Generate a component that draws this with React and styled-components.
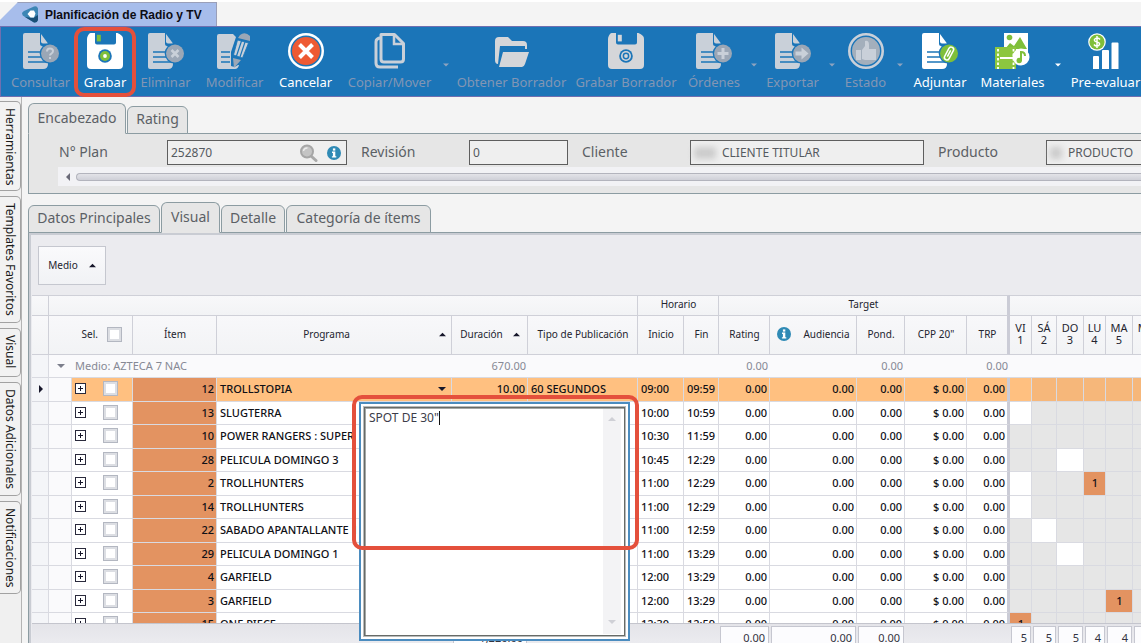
import React from "react";
import styled, { createGlobalStyle, css } from "styled-components";

const Global = createGlobalStyle`
  * { box-sizing: border-box; }
  html, body { margin: 0; height: 100%; }
  body { background: #f4f4f4; font-family: "Noto Sans", "Open Sans", sans-serif; overflow: hidden; }
  button, input, textarea { font: inherit; color: inherit; margin: 0; }
`;

const ORANGE = "#e39361";
const LINE = "#d9dae1";
const BLUE = "#1b75b8";

const Shell = styled.div`
  display: flex;
  flex-direction: column;
  height: 100vh;
  overflow: hidden;
`;

/* ---------- window tab ---------- */
const WindowTabs = styled.div`
  display: flex;
  height: 26px;
  border-top: 2px solid #fff;
`;
const WindowTabShape = styled.button`
  display: flex;
  align-items: center;
  gap: 6px;
  width: 217px;
  padding: 0 0 0 22px;
  border: 0;
  border-right: 1px solid #9a9fb8;
  border-top: 1px solid #9a9fb8;
  background: #a7bdeb;
  clip-path: polygon(18px 0, 100% 0, 100% 100%, 0 100%, 0 18px);
  font: bold 12px "Liberation Sans", sans-serif;
  color: #0c0c14;
  white-space: nowrap;
`;

/* ---------- toolbar ---------- */
const Toolbar = styled.nav`
  display: flex;
  flex: none;
  height: 71px;
  padding: 0 0 0 3px;
  background: ${BLUE};
  border: 1px solid #6f6fb0;
  border-right: 0;
`;
const Action = styled.button`
  position: relative;
  display: flex;
  flex: none;
  flex-direction: column;
  align-items: center;
  gap: 3px;
  width: ${(p) => p.$w}px;
  padding: 6px 0 0;
  border: 0;
  background: none;
  color: ${(p) => (p.disabled ? "#8296b4" : "#fff")};
  font-size: 13px;
  line-height: 20px;
  white-space: nowrap;
`;
const DropArrow = styled.button`
  flex: none;
  width: 13px;
  padding: 0;
  border: 0;
  background: none;
  color: ${(p) => (p.disabled ? "#8ea3bf" : "#fff")};
`;
const Highlight = styled.span`
  position: absolute;
  border: 4px solid #e4503c;
  border-radius: 10px;
  pointer-events: none;
`;
const ActionHighlight = styled(Highlight)`
  inset: 0 -3px -1px -3px;
  z-index: 2;
`;
const EditorHighlight = styled(Highlight)`
  left: 323px;
  top: 162px;
  width: 287px;
  height: 155px;
  z-index: 4;
`;

/* ---------- workspace ---------- */
const Workspace = styled.div`
  display: flex;
  flex: 1;
  min-height: 0;
`;
const SideTabs = styled.div`
  display: flex;
  flex: none;
  flex-direction: column;
  gap: 5px;
  width: 22px;
  padding-top: 4px;
  border-right: 1px solid #b4b4b4;
  background: #f0f0f0;
`;
const SideTab = styled.button`
  height: ${(p) => p.$h}px;
  width: 21px;
  padding: 6px 0 0;
  border: 1px solid #a2a2a2;
  border-left: 0;
  border-radius: 0 5px 5px 0;
  background: #f2f2f2;
  color: #1b1b1b;
  writing-mode: vertical-rl;
  text-align: left;
  font-size: 12px;
  line-height: 18px;
  white-space: nowrap;
`;
const Main = styled.main`
  display: flex;
  flex: 1;
  flex-direction: column;
  min-width: 0;
  padding: 6px 0 0 6px;
`;
const TabRow = styled.div`
  display: flex;
  align-items: flex-end;
  gap: 1px;
  height: 31px;
  margin-bottom: -1px;
  position: relative;
  z-index: 1;
`;
const Tab = styled.button`
  width: ${(p) => p.$w}px;
  height: ${(p) => (p.$active ? 31 : 28)}px;
  padding: 0 0 2px;
  border: 1px solid #8c9ca2;
  border-bottom-color: ${(p) => (p.$active ? "#e6e6e6" : "#8c9ca2")};
  border-radius: 6px 6px 0 0;
  background: #e6e6e6;
  color: #5b6065;
  font-size: 14px;
  line-height: 20px;
  white-space: nowrap;
`;

const HeaderPanel = styled.section`
  flex: none;
  height: 61px;
  margin-bottom: 8px;
  padding: 6px 0 0 30px;
  overflow: hidden;
  border: 1px solid #8c9ca2;
  border-right: 0;
  background: #e6e6e6;
`;
const Fields = styled.div`
  display: flex;
  gap: 14px;
`;
const Field = styled.div`
  display: flex;
  flex: none;
  align-items: center;
  label {
    width: 108px;
    padding-bottom: 2px;
    color: #5b6065;
    font-size: 14px;
    line-height: 20px;
  }
`;
const InputBox = styled.div`
  display: flex;
  align-items: center;
  gap: 6px;
  width: ${(p) => p.$w}px;
  height: 25px;
  padding: 0 5px 0 3px;
  border: 1px solid #5e5e5e;
  background: #efefef;
  input {
    flex: 1;
    min-width: 0;
    padding: 0 0 1px;
    border: 0;
    outline: 0;
    background: none;
    color: #555a60;
    font-size: 12px;
  }
`;
const Smudge = styled.span`
  flex: none;
  width: ${(p) => p.$w}px;
  height: 12px;
  background: #cbcbcb;
  filter: blur(3px);
`;
const ScrollStrip = styled.div`
  display: flex;
  align-items: center;
  gap: 4px;
  height: 19px;
  margin: 2px 0 0 -1px;
  padding-left: 6px;
  background: #f2f2f5;
  color: #6a6a78;
`;
const ScrollThumb = styled.div`
  flex: 1;
  height: 8px;
  border: 1px solid #b3b4bd;
  border-right: 0;
  border-radius: 4px 0 0 4px;
  background: linear-gradient(#e3e3e8, #cfd0d8);
`;

/* ---------- grid ---------- */
const GridPanel = styled.section`
  position: relative;
  display: flex;
  flex: 1;
  flex-direction: column;
  min-height: 0;
  border: 1px solid #8c9ca2;
  border-width: 1px 0 0 1px;
  background: #ebebef;
  box-shadow: inset 2px 2px 0 #c9ccd3;
  padding: 2px 0 0 3px;
  color: #33343f;
  font-size: 11px;
`;
const GroupBar = styled.div`
  flex: none;
  height: 60px;
  padding: 11px 6px;
`;
const GroupButton = styled.button`
  display: flex;
  align-items: center;
  justify-content: center;
  gap: 11px;
  width: 68px;
  height: 39px;
  padding: 0 0 1px;
  border: 1px solid #c5c7cf;
  background: linear-gradient(#fafafc, #f1f2f5);
  color: #23242f;
  font-size: 10px;
`;
const Rows = styled.div`
  flex: 1;
  min-height: 0;
  overflow: hidden;
  background: #fff;
`;
const Table = styled.table`
  width: 100%;
  min-width: 1150px;
  table-layout: fixed;
  border-collapse: separate;
  border-spacing: 0;
  line-height: 15px;
  td, th {
    padding: 0 2px 2px 3px;
    overflow: hidden;
    white-space: nowrap;
  }
`;
const Th = styled.th`
  height: ${(p) => (p.$band ? 21 : 39)}px;
  border-right: ${(p) => (p.$split ? "3px solid #cbccd6" : "1px solid #cfd0d8")};
  border-bottom: 1px solid #cfd0d8;
  ${(p) => p.$band && "border-top: 1px solid #cfd0d8;"}
  background: linear-gradient(#f8f8fa, #f2f3f5);
  color: #23242f;
  font-size: 10px;
  font-weight: 400;
  ${(p) => p.$day && css`
    && { padding: 0 0 3px; }
    font-size: 11px;
    line-height: 12px;
    && { white-space: pre-line; }
  `}
`;
const HeadCell = styled.div`
  display: flex;
  align-items: center;
  justify-content: ${(p) => p.$align || "center"};
  gap: ${(p) => p.$gap || 9}px;
  padding: 0 ${(p) => p.$pad || 0}px;
`;
const HeadTitle = styled.span`
  flex: 1;
  text-align: center;
`;
const Tr = styled.tr`
  height: 23px;
  color: #101016;
  &:nth-child(even) { height: 24px; }
`;
const GroupTr = styled.tr`
  height: 23px;
  color: #868995;
`;
const Td = styled.td`
  border-right: ${(p) => (p.$split ? "3px solid #cbccd6" : `1px solid ${LINE}`)};
  border-bottom: 1px solid ${LINE};
  background: ${(p) => p.$bg || "#fff"};
  text-align: ${(p) => p.$align || "left"};
  font-weight: ${(p) => (p.$strong ? 500 : 400)};
`;
const GroupTd = styled.td`
  border-bottom: 1px solid ${LINE};
  background: #fafafc;
  text-align: ${(p) => p.$align || "right"};
`;
const SelCell = styled.div`
  display: flex;
  align-items: center;
  gap: 17px;
`;
const Check = styled.input`
  appearance: none;
  width: 15px;
  height: 15px;
  border: 1px solid #b3b7c1;
  background: #fff;
  box-shadow: inset 0 0 0 2px #dcdee3;
`;
const Expander = styled.button`
  display: flex;
  width: 11px;
  height: 11px;
  padding: 0;
  border: 0;
  background: none;
`;
const FlexCell = styled.div`
  display: flex;
  align-items: center;
  justify-content: space-between;
  padding-right: 3px;
`;
const FootBar = styled.div`
  flex: none;
  height: 20px;
  padding-top: 2px;
  overflow: hidden;
  border-top: 1px solid #c4c5cd;
  background: linear-gradient(#e4e4e9, #ebebef);
`;
const Total = styled.div`
  height: 22px;
  margin: 0 -1px 0 -2px;
  padding: 0 3px;
  border: 1px solid #c6c7d0;
  background: #fcfcfe;
  text-align: right;
  line-height: 21px;
`;

/* ---------- text editor over the grid ---------- */
const Editor = styled.div`
  position: absolute;
  left: 330px;
  top: 169px;
  z-index: 3;
  width: 271px;
  height: 239px;
  padding: 3px;
  border: 2px solid #4b8cbf;
  background: #fff;
`;
const EditorInner = styled.div`
  position: relative;
  display: flex;
  height: 100%;
  padding: 1px;
  border: 1px solid #676b68;
  box-shadow: inset 1px 1px 0 #a5a8a6, 0 0 0 1px #b9bbba;
`;
const EditorText = styled.textarea`
  flex: 1;
  min-width: 0;
  padding: 1px 3px;
  border: 0;
  outline: 0;
  resize: none;
  background: #fff;
  color: #3c3d49;
  font-size: 12px;
  line-height: 15px;
`;
const Caret = styled.span`
  position: absolute;
  left: 74px;
  top: 3px;
  width: 1px;
  height: 14px;
  background: #111;
`;
const EditorScroll = styled.div`
  display: flex;
  flex-direction: column;
  justify-content: space-between;
  align-items: center;
  width: 18px;
  margin-right: 2px;
  padding: 6px 0 8px;
  background: #f3f3f5;
  color: #cfd0d6;
`;

/* ---------- small drawings ---------- */
const Tri = ({ dir = "up", size = 7, color = "currentColor" }) => {
  const d = { up: "M0 6 4 2 8 6z", down: "M0 2 8 2 4 6z", left: "M6 0 6 8 2 4z", right: "M2 0 2 8 6 4z" }[dir];
  return <svg width={size} height={size} viewBox="0 0 8 8" aria-hidden="true"><path d={d} fill={color} /></svg>;
};
const InfoIcon = () => (
  <svg width="14" height="14" viewBox="0 0 14 14" aria-hidden="true">
    <circle cx="7" cy="7" r="7" fill="#2f8ab5" />
    <rect x="5.9" y="2.4" width="2.4" height="2.2" fill="#fff" />
    <path d="M5 5.6h3.3v4.6h1v1.3H4.9v-1.3h1V6.9H5z" fill="#fff" />
  </svg>
);
const SearchIcon = () => (
  <svg width="22" height="18" viewBox="0 0 22 18" aria-hidden="true">
    <path d="M12 12l5 4.500" stroke="#a9a9a9" strokeWidth="3" strokeLinecap="round" />
    <circle cx="8" cy="7.500" r="6" fill="#c4c4c4" stroke="#a6a6a6" strokeWidth="2" />
    <path d="M4.500 7a3.500 3.500 0 0 1 4-3" stroke="#ececec" strokeWidth="1.500" fill="none" />
  </svg>
);
const PlusBox = () => (
  <svg width="11" height="11" viewBox="0 0 11 11" shapeRendering="crispEdges" aria-hidden="true">
    <rect x="0.5" y="0.5" width="10" height="10" fill="#fff" stroke="#2a2a3c" />
    <path d="M3 5.500h5M5.500 3v5" stroke="#16162a" />
  </svg>
);
const Logo = () => (
  <svg width="17" height="18" viewBox="0 0 17 18" aria-hidden="true">
    <path d="M0 7.500Q0 6 2 5L12 .5q3-1 4 2V14q-1 3-4 2.500L3 11Q0 9.500 0 7.500z" fill="#3d86b5" />
    <path d="M3 11l9 5.500q3 .5 4-2.500V9l-5 3z" fill="#1b5078" />
    <path d="M5.500 8l3-3.500h3.500l1.500 3-1.500 4H8.500z" fill="#fff" />
  </svg>
);

const G = "#c9d0d9";
const Page = ({ color = G }) => (
  <>
    <path d="M2 0h15v11q0 2 2 2h6v18q0 5-5 5H2q-2 0-2-2V2q0-2 2-2z" fill={color} />
    <path d="M18 1l7 9.500h-5q-2 0-2-2z" fill={color} />
    <path d="M5 19h14M5 24h15M5 29h20" stroke={BLUE} strokeWidth="1.700" />
  </>
);
const Badge = ({ fill = "#9ba7b6", children }) => (
  <>
    <circle cx="27" cy="20.500" r="10.300" fill={BLUE} />
    <circle cx="27" cy="20.500" r="9" fill={fill} />
    {children}
  </>
);
const Floppy = ({ color, accent, inner }) => (
  <>
    <path d="M3.500 0H8v9.500q0 2 2 2h17q2 0 2-2V0h1.500Q33 1 35 3q1 1 1 3v26q0 4-4 4H4q-4 0-4-4V6q0-2 1-3.500Q2 0 3.500 0z" fill={color} />
    <rect x="9.800" y="1.800" width="4" height="6.600" fill={accent} />
    <circle cx="18" cy="23" r="6.800" fill={BLUE} />
    <circle cx="18" cy="23" r="5" fill={accent} />
    {inner && <circle cx="18" cy="23" r="3.400" fill={BLUE} />}
    <circle cx="18" cy="23" r="1.900" fill={color} />
  </>
);

const drawings = {
  ask: <><Page /><Badge><path d="M24 18.500q0-3 3-3t3 2.500q0 1.500-1.500 2.500t-1.500 2M27 24v2" fill="none" stroke={G} strokeWidth="2" /></Badge></>,
  save: <Floppy color="#fff" accent="#7fbf3a" />,
  remove: <><Page /><Badge><path d="M23.500 17l7 7m0-7l-7 7" stroke={G} strokeWidth="2.600" /></Badge></>,
  edit: <>
    <path d="M2 1h14l3 3-5 15v14q4 2 7-1h1q-1 4-4 4H2q-2 0-2-2V3q0-2 2-2z" fill={G} />
    <path d="M4 19h9M4 24h9M4 29h9" stroke={BLUE} strokeWidth="1.700" />
    <path d="M23 2q5-4 10 1v5l-12-3z" fill="#9ba7b6" />
    <path d="M20.500 7l11 3-6 15-9-3z" fill={G} stroke={BLUE} strokeWidth=".8" />
    <path d="M24.500 8l-5 15M28 9l-5 15" stroke={BLUE} strokeWidth="1.200" />
    <path d="M16 25l8 2-7 8z" fill="#9ba7b6" />
  </>,
  cancel: <>
    <circle cx="18" cy="18" r="18" fill="#fff" />
    <circle cx="18" cy="18" r="15.500" fill={BLUE} />
    <circle cx="18" cy="18" r="14" fill="#ee5a33" />
    <path d="M11.500 11.500l13 13m0-13l-13 13" stroke="#fff" strokeWidth="4" />
  </>,
  copy: <g fill="none" stroke={G} strokeWidth="3">
    <path d="M9 1.500h13.500l9 9V26q0 3-3 3H12q-3 0-3-3z" strokeLinejoin="round" />
    <path d="M22 3v8h9" strokeWidth="2.500" />
    <path d="M9 5q-5 0-5 4v21q0 4 4 4h18" />
  </g>,
  open: <>
    <path d="M1 8q0-4 4-4h9l4 4h11q4 0 4 4v4h-2v-3H6L4 31q-3 0-3-4z" fill="#d5d6d9" />
    <path d="M9 19h26l-4 12q-1 3-3 3H5z" fill="#d5d6d9" />
  </>,
  draft: <Floppy color="#d5d6d9" accent="#d5d6d9" inner />,
  add: <><Page /><Badge><path d="M27 15v11M21.500 20.500h11" stroke={G} strokeWidth="3" /></Badge></>,
  export: <><Page /><Badge><path d="M20.500 18.500h6v-4l7 6-7 6v-4h-6z" fill={G} /></Badge></>,
  state: <>
    <circle cx="18" cy="18" r="16.700" fill="none" stroke={G} strokeWidth="2.600" />
    <circle cx="18" cy="18" r="14" fill="#a3afbc" />
    <path d="M8 17h5v10H8zM14 17l3-4V8q4-1 4 4v4h7v11H17l-3-1z" fill={G} />
  </>,
  attach: <><Page color="#fff" /><Badge fill="#7fbf3a"><g transform="rotate(28 27 20.500)" fill="none" stroke="#fff" strokeWidth="1.500"><rect x="24.500" y="13.500" width="5" height="14" rx="2.500" /><path d="M27 17v7" /></g></Badge></>,
  media: <>
    <path d="M9 0h24v20H9z" fill="#fff" />
    <circle cx="14.500" cy="4.500" r="2.800" fill="#7fbf3a" />
    <path d="M10 16l5-6 4 3 6-9 7 12z" fill="#7fbf3a" />
    <path d="M0 14h21v22H0z" fill="#8cc63f" />
    <path d="M3 16v20M18.500 16v20" stroke="#fff" strokeWidth="1.800" strokeDasharray="2.500 2" />
    <path d="M5 25h14" stroke="#fff" strokeWidth="2" />
    <circle cx="26" cy="24" r="8.500" fill="#fff" />
    <path d="M26 28v-9q4 0 4 4" fill="none" stroke="#7fbf3a" strokeWidth="2" />
    <circle cx="24.200" cy="27.500" r="2.700" fill="#7fbf3a" />
  </>,
  evaluate: <>
    <circle cx="9" cy="9" r="8.800" fill="#fff" />
    <circle cx="9" cy="9" r="7.600" fill="#7fbf3a" />
    <path d="M12 6.500q-1-1.500-3-1.500t-2.700 2Q6.500 8.600 9 9t2.700 2q-.7 2-2.700 2t-3-1.500M9 3v12" fill="none" stroke="#fff" strokeWidth="1.500" />
    <path d="M5 24q0-1 1-1h4q1 0 1 1v12H5z M14 18q0-1 1-1h5q1 0 1 1v18h-7z M23.500 10.500q0-1 1-1h5q1 0 1 1V36h-7z" fill="#fff" />
  </>,
};

const actions = [
  ["Consultar", "ask", 73, true],
  ["Grabar", "save", 56, false],
  ["Eliminar", "remove", 65, true],
  ["Modificar", "edit", 73, true],
  ["Cancelar", "cancel", 69, false],
  ["Copiar/Mover", "copy", 99, true, true],
  ["Obtener Borrador", "open", 119, true],
  ["Grabar Borrador", "draft", 110, true],
  ["Órdenes", "add", 66, true, true],
  ["Exportar", "export", 65, true, true],
  ["Estado", "state", 55, true, true],
  ["Adjuntar", "attach", 68, false],
  ["Materiales", "media", 77, false, true],
  ["Pre-evaluar", "evaluate", 83, false],
];

const sideTabs = [["Herramientas", 90], ["Templates Favoritos", 127], ["Visual", 49], ["Datos Adicionales", 114], ["Notificaciones", 93]];

const columns = [17, 23, 61, 84, 235, 76, 110, 46, 35, 51, 87, 48, 62, 43, 22, 25, 27, 22, 27, 24];
const days = ["VI\n1", "SÁ\n2", "DO\n3", "LU\n4", "MA\n5", "MI\n6"];

const rows = [
  { item: 12, name: "TROLLSTOPIA", from: "09:00", to: "09:59", current: true, dur: "10.00", kind: "60 SEGUNDOS" },
  { item: 13, name: "SLUGTERRA", from: "10:00", to: "10:59", open: 0 },
  { item: 10, name: "POWER RANGERS : SUPER", from: "10:30", to: "11:59" },
  { item: 28, name: "PELICULA DOMINGO 3", from: "10:45", to: "12:29", open: 2 },
  { item: 2, name: "TROLLHUNTERS", from: "11:00", to: "12:29", open: 0, spot: 3 },
  { item: 14, name: "TROLLHUNTERS", from: "11:00", to: "12:29", open: 0 },
  { item: 22, name: "SABADO APANTALLANTE 1", from: "11:00", to: "12:59", open: 1 },
  { item: 29, name: "PELICULA DOMINGO 1", from: "11:00", to: "13:29", open: 2 },
  { item: 4, name: "GARFIELD", from: "12:00", to: "13:29" },
  { item: 3, name: "GARFIELD", from: "12:00", to: "13:29", spot: 4 },
  { item: 15, name: "ONE PIECE", from: "12:30", to: "12:59", spot: 0 },
];

const Cols = () => (
  <colgroup>
    {columns.map((w, i) => <col key={i} width={w} />)}
    <col />
  </colgroup>
);

function dayColor(row, i) {
  if (row.spot === i) return ORANGE;
  if (row.current) return i === 0 ? "#ffc080" : "#f6b77a";
  return row.open === i ? "#fff" : "#e6e6e6";
}

function PlanRow({ row }) {
  const bg = row.current ? "#ffc080" : "#fff";
  const cell = (value, align = "right") => <Td $strong $bg={bg} $align={align}>{value}</Td>;
  return (
    <Tr>
      <Td $bg="#f4f5f8" $align="center">{row.current && <Tri dir="right" size={8} color="#16162a" />}</Td>
      <Td $bg="#fafafc" />
      <Td $bg={bg}>
        <SelCell>
          <Expander aria-label={`Expandir ${row.item}`}><PlusBox /></Expander>
          <Check type="checkbox" aria-label={`Seleccionar ${row.item}`} />
        </SelCell>
      </Td>
      <Td $strong $bg={ORANGE} $align="right">{row.item}</Td>
      <Td $strong $bg={bg}>
        <FlexCell>{row.name}{row.current && <Tri dir="down" size={8} color="#16162a" />}</FlexCell>
      </Td>
      {cell(row.dur)}
      {cell(row.kind, "left")}
      {cell(row.from, "left")}
      {cell(row.to, "left")}
      {cell("0.00")}
      {cell("0.00")}
      {cell("0.00")}
      {cell("$ 0.00")}
      <Td $strong $bg={bg} $align="right" $split>0.00</Td>
      {days.map((d, i) => <Td key={d} $strong $align="center" $bg={dayColor(row, i)}>{row.spot === i ? 1 : null}</Td>)}
      <Td $bg={row.current ? "#f6b77a" : "#e6e6e6"} />
    </Tr>
  );
}

function PlanField({ id, label, width, value, smudge, children }) {
  return (
    <Field>
      <label htmlFor={id}>{label}</label>
      <InputBox $w={width}>
        {smudge && <Smudge $w={smudge} />}
        <input id={id} defaultValue={value} />
        {children}
      </InputBox>
    </Field>
  );
}

export default function App() {
  return (
    <Shell>
      <Global />
      <WindowTabs>
        <WindowTabShape><Logo />Planificación de Radio y TV</WindowTabShape>
      </WindowTabs>

      <Toolbar>
        {actions.map(([label, icon, w, off, menu]) => (
          <React.Fragment key={label}>
            <Action $w={w} disabled={off}>
              <svg width="36" height="36" viewBox="0 0 36 36" aria-hidden="true">{drawings[icon]}</svg>
              {label}
              {icon === "save" && <ActionHighlight />}
            </Action>
            {menu && <DropArrow disabled={off} aria-label={`Opciones de ${label}`}><Tri dir="down" size={6} /></DropArrow>}
          </React.Fragment>
        ))}
      </Toolbar>

      <Workspace>
        <SideTabs>
          {sideTabs.map(([label, h]) => <SideTab key={label} $h={h}>{label}</SideTab>)}
        </SideTabs>
        <Main>
          <TabRow>
            <Tab $active $w={98}>Encabezado</Tab>
            <Tab $w={61}>Rating</Tab>
          </TabRow>
          <HeaderPanel>
            <Fields>
              <PlanField id="plan" label="N° Plan" width={180} value="252870"><SearchIcon /><InfoIcon /></PlanField>
              <PlanField id="revision" label="Revisión" width={99} value="0" />
              <PlanField id="cliente" label="Cliente" width={234} value="CLIENTE TITULAR" smudge={22} />
              <PlanField id="producto" label="Producto" width={234} value="PRODUCTO" smudge={12} />
            </Fields>
            <ScrollStrip><Tri dir="left" size={8} /><ScrollThumb /></ScrollStrip>
          </HeaderPanel>

          <TabRow>
            <Tab $w={132}>Datos Principales</Tab>
            <Tab $active $w={59}>Visual</Tab>
            <Tab $w={64}>Detalle</Tab>
            <Tab $w={145}>Categoría de ítems</Tab>
          </TabRow>
          <GridPanel>
            <GroupBar>
              <GroupButton>Medio <Tri color="#16162a" /></GroupButton>
            </GroupBar>
            <Rows>
              <Table>
                <Cols />
                <thead>
                  <tr>
                    <Th $band />
                    <Th $band colSpan={6} />
                    <Th $band colSpan={2}>Horario</Th>
                    <Th $band $split colSpan={5}>Target</Th>
                    <Th $band colSpan={7} />
                  </tr>
                  <tr>
                    <Th />
                    <Th colSpan={2}>
                      <HeadCell $align="flex-end" $pad={8}><label htmlFor="all">Sel.</label><Check id="all" type="checkbox" /></HeadCell>
                    </Th>
                    <Th>Ítem</Th>
                    <Th><HeadCell $pad={3}><HeadTitle>Programa</HeadTitle><Tri color="#16162a" /></HeadCell></Th>
                    <Th><HeadCell $pad={3} $gap={10}>Duración <Tri color="#16162a" /></HeadCell></Th>
                    <Th>Tipo de Publicación</Th>
                    <Th>Inicio</Th>
                    <Th>Fin</Th>
                    <Th>Rating</Th>
                    <Th><HeadCell $gap={12}><InfoIcon />Audiencia</HeadCell></Th>
                    <Th>Pond.</Th>
                    <Th>CPP 20"</Th>
                    <Th $split>TRP</Th>
                    {days.map((d) => <Th key={d} $day>{d}</Th>)}
                    <Th />
                  </tr>
                </thead>
                <tbody>
                  <GroupTr>
                    <Td $bg="#f4f5f8" />
                    <GroupTd $align="center"><Tri dir="down" size={8} color="#7c7f8c" /></GroupTd>
                    <GroupTd $align="left" colSpan={3}>Medio: AZTECA 7 NAC</GroupTd>
                    <GroupTd>670.00</GroupTd>
                    <GroupTd colSpan={3} />
                    <GroupTd>0.00</GroupTd>
                    <GroupTd />
                    <GroupTd>0.00</GroupTd>
                    <GroupTd />
                    <GroupTd>0.00</GroupTd>
                    <GroupTd colSpan={7} />
                  </GroupTr>
                  {rows.map((row) => <PlanRow key={row.item} row={row} />)}
                </tbody>
              </Table>
            </Rows>
            <FootBar>
              <Table>
                <Cols />
                <tbody>
                  <tr>
                    <td colSpan={5} />
                    <td><Total>1,220.00</Total></td>
                    <td colSpan={3} />
                    <td><Total>0.00</Total></td>
                    <td><Total>0.00</Total></td>
                    <td><Total>0.00</Total></td>
                    <td colSpan={2} />
                    {[5, 5, 5, 4, 4, 4].map((n, i) => <td key={i}><Total>{n}</Total></td>)}
                    <td />
                  </tr>
                </tbody>
              </Table>
            </FootBar>
            <Editor>
              <EditorInner>
                <EditorText aria-label="Descripción del programa" defaultValue={'SPOT DE 30"'} />
                <Caret />
                <EditorScroll><Tri size={8} /><Tri dir="down" size={8} /></EditorScroll>
              </EditorInner>
            </Editor>
            <EditorHighlight />
          </GridPanel>
        </Main>
      </Workspace>
    </Shell>
  );
}
